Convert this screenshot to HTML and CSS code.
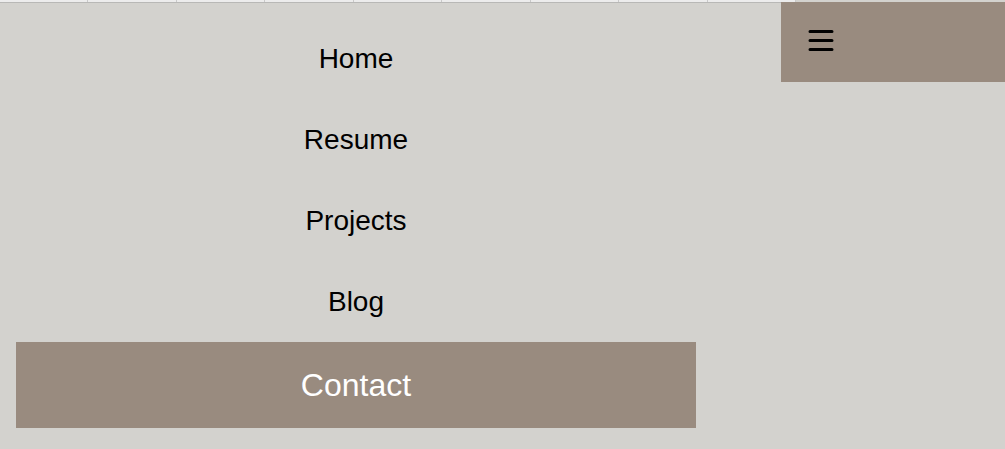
FILE: index.html
```html
<!DOCTYPE html>
<html lang="en">
<head>
  <meta charset="UTF-8" />
  <meta name="viewport" content="width=device-width, initial-scale=1.0">
  <title>Menu</title>
  <link rel="stylesheet" href="styles.css">
</head>
<body>

  <!-- Faixa superior -->
  <div class="tab-strip">
    <span></span><span></span><span></span><span></span><span></span>
    <span></span><span></span><span></span><span></span>
  </div>

  <!-- Botão do menu -->
  <button class="menu-toggle" aria-label="Menu">
    <svg width="26" height="22" viewBox="0 0 26 22">
      <path d="M2 2.5 H24 M2 11.5 H24 M2 20.5 H24" stroke="#000" stroke-width="3" stroke-linecap="round" fill="none" />
    </svg>
  </button>

  <nav class="menu">
    <a href="#">Home</a>
    <a href="#">Resume</a>
    <a href="#">Projects</a>
    <a href="#">Blog</a>
    <a href="#" class="active">Contact</a>
  </nav>

</body>
</html>
```

FILE: styles.css
```css
body {
  background: #d3d2ce;
  font-family: 'Liberation Sans', Arial, sans-serif;
  margin: 0;
  overflow: hidden;
}

.tab-strip {
  display: flex;
  width: 796px;
  height: 2px;
  background: #ececec;
  border-bottom: 1px solid #b8b8b6;
}

.tab-strip span {
  flex: 1;
  border-right: 1px solid #c9c9c9;
}

.menu-toggle {
  position: absolute;
  top: 2px;
  right: 0;
  width: 224px;
  height: 80px;
  background: #998b7f;
  border: none;
  padding: 0 0 0 27px;
  display: flex;
  align-items: flex-start;
  cursor: pointer;
}

.menu-toggle svg {
  margin-top: 27px;
}

.menu {
  width: 680px;
  margin: 15px 16px 0;
  display: flex;
  flex-direction: column;
}

.menu a {
  display: block;
  height: 81px;
  line-height: 81px;
  text-align: center;
  font-size: 28px;
  color: #000;
  text-decoration: none;
}

.menu a.active {
  height: 86px;
  line-height: 86px;
  font-size: 32px;
  color: #fff;
  background: #998b7f;
}
```
